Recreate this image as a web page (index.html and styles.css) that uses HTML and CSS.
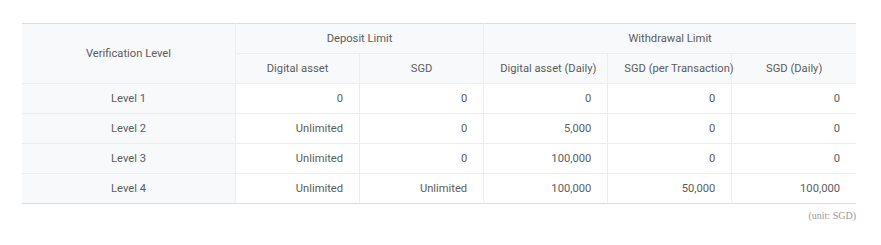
FILE: index.html
```html
<!DOCTYPE html>
<html lang="en">
<head>
  <meta charset="UTF-8">
  <title>Verification Limits</title>
  <link rel="stylesheet" href="styles.css">
</head>
<body>
  <div class="limits">
    <table class="limitTable">
      <thead>
        <tr>
          <th rowspan="2" class="levelHead">Verification Level</th>
          <th colspan="2">Deposit Limit</th>
          <th colspan="3">Withdrawal Limit</th>
        </tr>
        <tr>
          <th>Digital asset</th>
          <th>SGD</th>
          <th>Digital asset (Daily)</th>
          <th>SGD (per Transaction)</th>
          <th>SGD (Daily)</th>
        </tr>
      </thead>
      <tbody>
        <tr>
          <td class="level">Level 1</td>
          <td>0</td><td>0</td><td>0</td><td>0</td><td>0</td>
        </tr>
        <tr>
          <td class="level">Level 2</td>
          <td>Unlimited</td><td>0</td><td>5,000</td><td>0</td><td>0</td>
        </tr>
        <tr>
          <td class="level">Level 3</td>
          <td>Unlimited</td><td>0</td><td>100,000</td><td>0</td><td>0</td>
        </tr>
        <tr>
          <td class="level">Level 4</td>
          <td>Unlimited</td><td>Unlimited</td><td>100,000</td><td>50,000</td><td>100,000</td>
        </tr>
      </tbody>
    </table>
    <p class="unit">(unit: SGD)</p>
  </div>
</body>
</html>
```

FILE: styles.css
```css
body {
  margin: 0;
  background: #fff;
  font-family: Roboto, "Liberation Sans", sans-serif;
  color: #5c5c5c;
}

.limits {
  padding: 23px 25px 0 22px;
}

.limitTable {
  width: 834px;
  border-collapse: collapse;
  table-layout: fixed;
  font-size: 11.2px;
  border-top: 1px solid #dcdcdc;
  border-bottom: 1px solid #dcdcdc;
}

.limitTable th,
.limitTable td {
  height: 29px;
  padding: 0 16px;
  border: 1px solid #ededed;
  font-weight: normal;
  white-space: nowrap;
}

.limitTable tr > :first-child {
  border-left: none;
}

.limitTable tr > :last-child {
  border-right: none;
}

.limitTable thead tr:first-child th {
  border-top: none;
}

.limitTable tbody tr:last-child td {
  border-bottom: none;
}

.limitTable th {
  background: #f8f9fb;
  text-align: center;
}

.limitTable .levelHead {
  width: 181px;
}

.limitTable td {
  text-align: right;
}

.limitTable td.level {
  text-align: center;
  background: #f8f9fb;
}

.unit {
  margin: 6px 0 0;
  text-align: right;
  font-family: "Liberation Serif", serif;
  font-size: 10px;
  color: #999;
}
```
